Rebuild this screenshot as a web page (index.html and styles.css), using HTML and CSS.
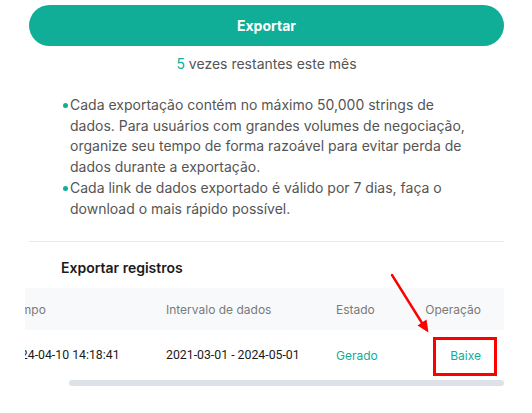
FILE: index.html
```html
<!DOCTYPE html>
<html lang="pt">
<head>
<meta charset="utf-8">
<link rel="stylesheet" href="styles.css">
</head>
<body>
<div class="page">
  <button class="export-btn">Exportar</button>
  <p class="remaining"><span class="num">5</span> vezes restantes este mês</p>
  <ul class="notes">
    <li>Cada exportação contém no máximo 50,000 strings de dados. Para usuários com grandes volumes de negociação, organize seu tempo de forma razoável para evitar perda de dados durante a exportação.</li>
    <li>Cada link de dados exportado é válido por 7 dias, faça o download o mais rápido possível.</li>
  </ul>
  <hr class="divider">
  <h3 class="records-title">Exportar registros</h3>
  <div class="table-scroll" id="tscroll">
    <table class="records">
      <colgroup>
        <col class="c1"><col class="c2"><col class="c3"><col class="c4">
      </colgroup>
      <thead>
        <tr><th class="first">Tempo</th><th>Intervalo de dados</th><th>Estado</th><th class="op">Operação</th></tr>
      </thead>
      <tbody>
        <tr><td class="first num-cell">2024-04-10 14:18:41</td><td class="num-cell">2021-03-01 - 2024-05-01</td><td class="status">Gerado</td><td class="op"><a class="dl">Baixe</a></td></tr>
      </tbody>
    </table>
  </div>
  <div class="hscroll"><div class="thumb"></div></div>
</div>
<div class="highlight-box"></div>
<svg class="arrow" width="532" height="413" viewBox="0 0 532 413">
  <line x1="392" y1="275" x2="422" y2="323" stroke="#f00" stroke-width="2.4" stroke-linecap="round"/>
  <polygon points="428.5,332.5 417.5,325.5 426.5,319.5" fill="#f00"/>
</svg>
<script src="script.js"></script>
</body>
</html>
```

FILE: styles.css
```css
* { box-sizing: border-box; }
html, body { margin: 0; padding: 0; background: #fff; }
body {
  font-family: Inter, "Noto Sans", sans-serif;
  color: #555;
  width: 532px;
  height: 413px;
  overflow: hidden;
  position: relative;
}
.page {
  padding: 5px 28px 0 29px;
  display: flex;
  flex-direction: column;
}
.export-btn {
  height: 41px;
  border: none;
  border-radius: 21px;
  background: #10ad97;
  color: #fff;
  font-family: inherit;
  font-weight: 700;
  font-size: 14px;
  width: 100%;
}
.remaining {
  margin: 8px 0 0;
  text-align: center;
  font-size: 14px;
  line-height: 20px;
  color: #555;
}
.remaining .num { color: #10ad97; }
.notes {
  list-style: none;
  margin: 21px 0 0;
  padding: 0 28px 0 41px;
  font-size: 14px;
  line-height: 20.7px;
  color: #555;
}
.notes li { position: relative; }
.notes li::before {
  content: "";
  position: absolute;
  left: -7px;
  top: 8px;
  width: 5px;
  height: 5px;
  border-radius: 50%;
  background: #10ad97;
}
.divider {
  margin: 22px 0 0;
  border: none;
  border-top: 1px solid #e6e8eb;
}
.records-title {
  margin: 16px 0 0 32px;
  font-size: 14px;
  line-height: 20px;
  font-weight: 600;
  color: #1b1b1b;
}
.table-scroll {
  margin: 10px 0 0 -4px;
  overflow: hidden;
}
.records {
  width: 523px;
  border-collapse: collapse;
  table-layout: fixed;
  font-size: 12px;
}
.records col.c1 { width: 169px; }
.records col.c2 { width: 170px; }
.records col.c3 { width: 86px; }
.records col.c4 { width: 98px; }
.records th {
  background: #f8f9fb;
  height: 42px;
  padding: 0 0 0 16px;
  text-align: left;
  font-weight: 400;
  color: #7a7a7a;
  white-space: nowrap;
}
.records td {
  height: 50px;
  padding: 0 0 0 16px;
  color: #1b1b1b;
  white-space: nowrap;
}
.records .first { padding-left: 26px; }
.records .num-cell { font-family: Roboto, Inter, sans-serif; font-size: 12.3px; }
.records .op { text-align: right; padding-right: 23px; }
.records .status { color: #10ad97; }
.dl { color: #10ad97; text-decoration: none; }
.hscroll {
  height: 6px;
  margin-top: 0;
}
.thumb {
  height: 6px;
  margin-left: 40px;
  border-radius: 3px;
  background: #dde1e8;
}
.highlight-box {
  position: absolute;
  left: 433px;
  top: 337px;
  width: 64px;
  height: 39px;
  border: 3px solid #f00;
}
.arrow { position: absolute; left: 0; top: 0; pointer-events: none; }
```

FILE: script.js
```js
var s = document.getElementById('tscroll');
s.scrollLeft = s.scrollWidth;
```
